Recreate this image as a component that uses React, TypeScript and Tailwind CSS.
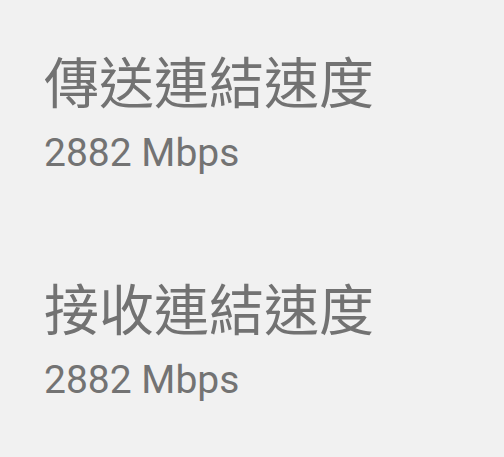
const ROWS = [
  { label: '傳送連結速度', value: '2882 Mbps' },
  { label: '接收連結速度', value: '2882 Mbps' },
];

export default function App() {
  return (
    <div className="min-h-[457px] w-full bg-[#f1f1f1] pl-[44px] pt-[52px]">
      <div className="flex flex-col gap-[104px]">
        {ROWS.map((row, i) => (
          <div key={i} className="flex flex-col gap-[24px]">
            <div className="text-[55px] leading-[55px] text-[#727272] font-['Noto_Sans_CJK_TC',sans-serif]">
              {row.label}
            </div>
            <div className="text-[39px] leading-[44px] text-[#737373] font-['Roboto','Noto_Sans_CJK_TC',sans-serif]">
              {row.value}
            </div>
          </div>
        ))}
      </div>
    </div>
  );
}
